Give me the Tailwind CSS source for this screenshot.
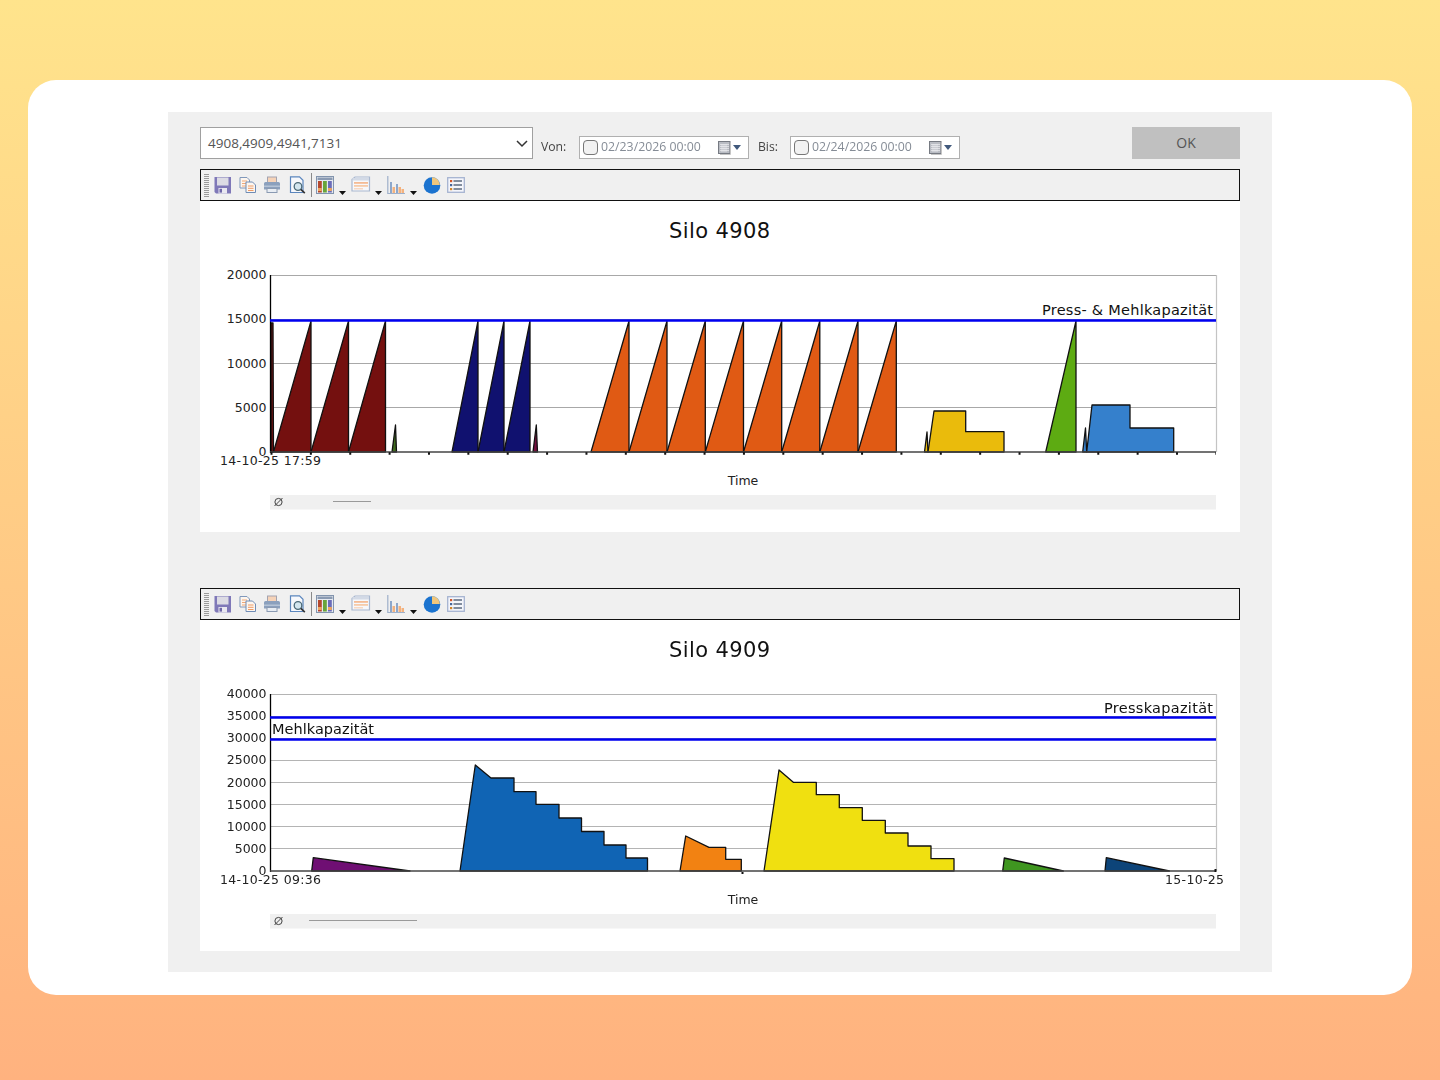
<!DOCTYPE html>
<html lang="de">
<head>
<meta charset="utf-8">
<title>Silo</title>
<script src="https://cdn.jsdelivr.net/npm/@tailwindcss/browser@4"></script>
</head>
<body class="m-0">
<svg width="0" height="0" class="absolute">
  <defs>
    <symbol id="i-save" viewBox="0 0 18 18">
      <path d="M0.500 1h16.500v16.500H2L0.500 16z" fill="#7f78b8"/>
      <rect x="3" y="1.500" width="11.500" height="8" fill="#dcdbe4"/>
      <rect x="4.500" y="12" width="8.500" height="5.500" fill="#e9e8f0"/>
      <rect x="5.500" y="12.800" width="2.500" height="3.800" fill="#6e67a8"/>
    </symbol>
    <symbol id="i-copy" viewBox="0 0 18 18">
      <path d="M1 1.500h7l2.500 2.500v8H1z" fill="#fdf6ef" stroke="#8098bb"/>
      <path d="M3 5h5M3 7.500h5M3 10h4" stroke="#f0a878"/>
      <path d="M7 6h6.500l3 3v7.500H7z" fill="#fdf6ef" stroke="#6f8cb6"/>
      <path d="M9 10h5.500M9 12.300h5.500M9 14.500h5.500" stroke="#ee9c66"/>
    </symbol>
    <symbol id="i-print" viewBox="0 0 18 18">
      <rect x="4.500" y="1" width="9" height="6" fill="#f6d3b8" stroke="#a3a3b0"/>
      <path d="M1 7.500a1.500 1.500 0 0 1 1.500-1.500h13a1.500 1.500 0 0 1 1.500 1.500v6H1z" fill="#8ba0bd"/>
      <rect x="1" y="9.500" width="16" height="1.500" fill="#b5c3d6"/>
      <rect x="4" y="12.500" width="10" height="4" fill="#e8edf3" stroke="#8a9ab2"/>
    </symbol>
    <symbol id="i-preview" viewBox="0 0 18 18">
      <path d="M1.500 0.800h9l3.500 3.500v12.200H1.500z" fill="#f6f8fc" stroke="#5b86bd" stroke-width="1.200"/>
      <circle cx="9" cy="10.500" r="3.800" fill="#d3e6ef" stroke="#4c6a78" stroke-width="1.300"/>
      <path d="M11.800 13.300l4 3.800" stroke="#333" stroke-width="1.600"/>
    </symbol>
    <symbol id="i-table" viewBox="0 0 18 18">
      <rect x="0.500" y="0.500" width="17" height="17" fill="#e6eaf1" stroke="#8294ad"/>
      <rect x="1.500" y="1.500" width="15" height="2.500" fill="#8a9ab2"/>
      <rect x="2" y="5" width="3.800" height="11.500" fill="#b5482e"/>
      <rect x="7" y="5" width="3.800" height="11.500" fill="#6aa53a"/>
      <rect x="12" y="5" width="3.800" height="11.500" fill="#6a6cb8"/>
      <path d="M2 13.500h3.800M12 13.500h3.800" stroke="#eda65e" stroke-width="3"/>
    </symbol>
    <symbol id="i-window" viewBox="0 0 20 18">
      <path d="M1 3.500L4 1h14.500v14H1z" fill="#f7f8fb" stroke="#a9b8cf" stroke-width="1.200"/>
      <rect x="1.500" y="2" width="16.500" height="2.500" fill="#d3dae6"/>
      <rect x="3" y="6" width="14" height="1.800" fill="#f4bb94"/>
      <rect x="3" y="9" width="14" height="1.800" fill="#f7cba9"/>
      <rect x="3" y="12" width="9" height="1.500" fill="#f7d8c3"/>
    </symbol>
    <symbol id="i-bars" viewBox="0 0 18 18">
      <path d="M0.800 0v17.500H18" fill="none" stroke="#9eb0ca" stroke-width="1.200"/>
      <rect x="3" y="6" width="2" height="11" fill="#8da7cb"/>
      <rect x="5.500" y="11" width="2.500" height="6" fill="#f4b27e"/>
      <rect x="9" y="8" width="2" height="9" fill="#8da7cb"/>
      <rect x="11.500" y="11" width="2.500" height="6" fill="#f4b27e"/>
      <rect x="14.500" y="13" width="2.500" height="4" fill="#f4b27e"/>
    </symbol>
    <symbol id="i-pie" viewBox="0 0 18 18">
      <circle cx="9" cy="9.500" r="8.300" fill="#1b73cf"/>
      <path d="M9 9V1.200A7.800 7.800 0 0 1 16.800 9z" fill="#efc67c"/>
    </symbol>
    <symbol id="i-legend" viewBox="0 0 18 18">
      <rect x="0.700" y="1.700" width="16.600" height="14.600" fill="#f5f6fb" stroke="#a5b3d0" stroke-width="1.300"/>
      <rect x="3" y="4" width="2.200" height="2.200" fill="#d2562a"/>
      <rect x="3" y="8" width="2.200" height="2.200" fill="#46669a"/>
      <rect x="3" y="12" width="2.200" height="2.200" fill="#d2862a"/>
      <path d="M6.500 5h8.500M6.500 9h8.500M6.500 13h8.500" stroke="#5c6b80" stroke-width="1.300"/>
    </symbol>
    <symbol id="i-drop" viewBox="0 0 7 4"><path d="M0 0h7L3.500 4z" fill="#111"/></symbol>
    <symbol id="i-cal" viewBox="0 0 14 14">
      <rect x="0.500" y="0.500" width="11.500" height="12" fill="#b9bcc3" stroke="#767a82"/>
      <path d="M2 3.500h9M2 5.500h9M2 7.500h9M2 9.500h9M4 3v8M6 3v8M8 3v8" stroke="#eeeef0" stroke-width=".7"/>
      <path d="M12.500 2v11.500H2" fill="none" stroke="#c4c4c4"/>
    </symbol>
    <symbol id="i-nul" viewBox="0 0 14 14">
      <circle cx="7" cy="7" r="3.600" fill="none" stroke="#444" stroke-width="1"/>
      <path d="M3 11L11 3" stroke="#444" stroke-width="1"/>
    </symbol>
  </defs>
</svg>

<main class="h-[1080px] w-[1440px] overflow-hidden bg-gradient-to-b from-[#ffe48c] to-[#ffb27f] pt-20 pl-7 font-['DejaVu_Sans',sans-serif]">
  <div class="h-[915px] w-[1384px] rounded-[28px] bg-white pt-8 pl-[140px]">
    <div class="h-[860px] w-[1104px] bg-[#f0f0f0] pt-[15px] pl-8">
      <div class="w-[1040px] blur-[0.3px]">

        <div class="flex h-8 items-end font-['Open_Sans',sans-serif]">
          <div class="flex h-8 w-[333px] items-center justify-between border-[1.5px] border-[#a0a0a0] bg-white pr-[3px] pl-[7px] text-[13.5px] text-[#555]">
            <span>4908,4909,4941,7131</span>
            <svg width="14" height="9" viewBox="0 0 14 9"><path d="M2 2l5 5 5-5" fill="none" stroke="#333" stroke-width="1.500"/></svg>
          </div>
          <span class="ml-[8px] flex h-[23px] w-[38px] items-center text-[12.2px] text-[#444]">Von:</span>
          <div class="flex h-[23px] w-[170px] items-center border-[1.5px] border-[#b0b0b0] bg-white pl-[3px] text-[12.3px] text-[#858c96]">
            <span class="h-[15px] w-[15px] rounded-[4px] border border-[#777] bg-[#f2f2f2]"></span>
            <span class="ml-[3px] w-[117px]">02/23/2026 00:00</span>
            <svg class="h-[14px] w-[14px]"><use href="#i-cal"/></svg>
            <svg class="ml-px" width="8" height="5" viewBox="0 0 8 5"><path d="M0 0h8L4 5z" fill="#41597c"/></svg>
          </div>
          <span class="ml-[9px] flex h-[23px] w-[32px] items-center text-[12.2px] text-[#444]">Bis:</span>
          <div class="flex h-[23px] w-[170px] items-center border-[1.5px] border-[#b0b0b0] bg-white pl-[3px] text-[12.3px] text-[#858c96]">
            <span class="h-[15px] w-[15px] rounded-[4px] border border-[#777] bg-[#f2f2f2]"></span>
            <span class="ml-[3px] w-[117px]">02/24/2026 00:00</span>
            <svg class="h-[14px] w-[14px]"><use href="#i-cal"/></svg>
            <svg class="ml-px" width="8" height="5" viewBox="0 0 8 5"><path d="M0 0h8L4 5z" fill="#41597c"/></svg>
          </div>
          <div class="ml-auto flex h-8 w-[108px] items-center justify-center bg-[#c0c0c0] pb-[2px] text-[14px] font-medium text-[#555]">OK</div>
        </div>

        <div class="mt-[10px] flex h-8 items-center border-[1.5px] border-[#111] bg-[#f0f0f0] pl-[3px]">
          <svg width="5" height="24"><path d="M0 1.500h5M0 3.500h5M0 5.500h5M0 7.500h5M0 9.500h5M0 11.500h5M0 13.500h5M0 15.500h5M0 17.500h5M0 19.500h5M0 21.500h5M0 23.500h5" stroke="#9a9a9a"/></svg>
          <svg class="ml-[5px] h-[18px] w-[18px]"><use href="#i-save"/></svg>
          <svg class="ml-[7px] h-[18px] w-[18px]"><use href="#i-copy"/></svg>
          <svg class="ml-[6px] h-[18px] w-[18px]"><use href="#i-print"/></svg>
          <svg class="ml-[8px] h-[18px] w-[18px]"><use href="#i-preview"/></svg>
          <span class="ml-[4px] h-6 w-px bg-[#8a8a8a]"></span>
          <svg class="ml-[4px] h-[18px] w-[18px]"><use href="#i-table"/></svg>
          <svg class="mt-[16px] ml-[5px] h-1 w-[7px]"><use href="#i-drop"/></svg>
          <svg class="ml-[5px] h-[18px] w-5"><use href="#i-window"/></svg>
          <svg class="mt-[16px] ml-[4px] h-1 w-[7px]"><use href="#i-drop"/></svg>
          <svg class="ml-[5px] h-[18px] w-[18px]"><use href="#i-bars"/></svg>
          <svg class="mt-[16px] ml-[5px] h-1 w-[7px]"><use href="#i-drop"/></svg>
          <svg class="ml-[6px] h-[18px] w-[18px]"><use href="#i-pie"/></svg>
          <svg class="ml-[6px] h-[18px] w-[18px]"><use href="#i-legend"/></svg>
        </div>

        <svg class="block bg-white" width="1040" height="331" viewBox="200 201 1040 331" font-family="DejaVu Sans, sans-serif" font-size="12.5" fill="#222">
          <text x="719.500" y="238" font-size="21" text-anchor="middle" textLength="101" fill="#111">Silo 4908</text>
          <path d="M270 275.500H1216M270 319.500H1216M270 363.500H1216M270 407.500H1216" stroke="#a8a8a8" stroke-width="1.200"/>
          <path d="M1216.500 275V452" stroke="#c4c4c4" stroke-width="1.200"/>
          <g stroke="#111" stroke-width="1.300" stroke-linejoin="round">
            <g fill="#74100f">
              <polygon points="271,452 271,323 273,323 273.500,452"/>
              <polygon points="273.500,452 311,321 311,452"/>
              <polygon points="311,452 348.500,321 348.500,452"/>
              <polygon points="348.500,452 385.500,321 385.500,452"/>
            </g>
            <polygon points="392,452 395.500,425 396.500,452" fill="#3f6a1e"/>
            <g fill="#10116f">
              <polygon points="452,452 478,321 478,452"/>
              <polygon points="478,452 504,321 504,452"/>
              <polygon points="504,452 530,321 530,452"/>
            </g>
            <polygon points="533,452 536.300,425 537.500,452" fill="#74103f"/>
            <g fill="#e05a14">
              <polygon points="591,452 629,321 629,452"/>
              <polygon points="629,452 667,321 667,452"/>
              <polygon points="667,452 705.300,321 705.300,452"/>
              <polygon points="705.300,452 743.500,321 743.500,452"/>
              <polygon points="743.500,452 781.700,321 781.700,452"/>
              <polygon points="781.700,452 819.800,321 819.800,452"/>
              <polygon points="819.800,452 858,321 858,452"/>
              <polygon points="858,452 896.300,321 896.300,452"/>
            </g>
            <g fill="#eabb0c">
              <polygon points="924.500,452 927,432 928,452"/>
              <polygon points="928,452 934,411 965.700,411 965.700,431.700 1004,431.700 1004,452"/>
            </g>
            <polygon points="1045.700,452 1076,321 1076,452" fill="#5dab12"/>
            <g fill="#3580cc">
              <polygon points="1082.700,452 1085.500,428 1086.700,452"/>
              <polygon points="1086.700,452 1092,405 1130,405 1130,428 1173.700,428 1173.700,452"/>
            </g>
          </g>
          <path d="M270.500 275V453" stroke="#000" stroke-width="1.300"/>
          <path d="M270 452H1216" stroke="#444" stroke-width="1.500"/>
          <path d="M270.500 453.500H1216" stroke="#111" stroke-width="2.500" stroke-dasharray="2 37.370"/>
          <path d="M270 320.500H1216" stroke="#0000f0" stroke-width="2.600"/>
          <text x="1213" y="315" font-size="14.500" text-anchor="end" textLength="171" fill="#111">Press- &amp; Mehlkapazität</text>
          <g text-anchor="end">
            <text x="266.500" y="279">20000</text>
            <text x="266.500" y="323">15000</text>
            <text x="266.500" y="367.500">10000</text>
            <text x="266.500" y="411.500">5000</text>
            <text x="266.500" y="456">0</text>
          </g>
          <text x="220" y="465" textLength="101">14-10-25 17:59</text>
          <text x="743" y="485" text-anchor="middle">Time</text>
          <rect x="270" y="495" width="946" height="14.500" fill="#f0f0f0"/>
          <use href="#i-nul" x="271.500" y="495" width="14" height="14"/>
          <path d="M333 501.500H371" stroke="#9a9a9a" stroke-width="1.200"/>
        </svg>

        <div class="mt-14 flex h-8 items-center border-[1.5px] border-[#111] bg-[#f0f0f0] pl-[3px]">
          <svg width="5" height="24"><path d="M0 1.500h5M0 3.500h5M0 5.500h5M0 7.500h5M0 9.500h5M0 11.500h5M0 13.500h5M0 15.500h5M0 17.500h5M0 19.500h5M0 21.500h5M0 23.500h5" stroke="#9a9a9a"/></svg>
          <svg class="ml-[5px] h-[18px] w-[18px]"><use href="#i-save"/></svg>
          <svg class="ml-[7px] h-[18px] w-[18px]"><use href="#i-copy"/></svg>
          <svg class="ml-[6px] h-[18px] w-[18px]"><use href="#i-print"/></svg>
          <svg class="ml-[8px] h-[18px] w-[18px]"><use href="#i-preview"/></svg>
          <span class="ml-[4px] h-6 w-px bg-[#8a8a8a]"></span>
          <svg class="ml-[4px] h-[18px] w-[18px]"><use href="#i-table"/></svg>
          <svg class="mt-[16px] ml-[5px] h-1 w-[7px]"><use href="#i-drop"/></svg>
          <svg class="ml-[5px] h-[18px] w-5"><use href="#i-window"/></svg>
          <svg class="mt-[16px] ml-[4px] h-1 w-[7px]"><use href="#i-drop"/></svg>
          <svg class="ml-[5px] h-[18px] w-[18px]"><use href="#i-bars"/></svg>
          <svg class="mt-[16px] ml-[5px] h-1 w-[7px]"><use href="#i-drop"/></svg>
          <svg class="ml-[6px] h-[18px] w-[18px]"><use href="#i-pie"/></svg>
          <svg class="ml-[6px] h-[18px] w-[18px]"><use href="#i-legend"/></svg>
        </div>

        <svg class="block bg-white" width="1040" height="331" viewBox="200 620 1040 331" font-family="DejaVu Sans, sans-serif" font-size="12.5" fill="#222">
          <text x="719.500" y="657" font-size="21" text-anchor="middle" textLength="101" fill="#111">Silo 4909</text>
          <path d="M270 694.500H1216M270 716.500H1216M270 738.500H1216M270 760.500H1216M270 782.500H1216M270 804.500H1216M270 826.500H1216M270 848.500H1216" stroke="#b4b4b4" stroke-width="1.200"/>
          <path d="M1216.500 694V871" stroke="#c4c4c4" stroke-width="1.200"/>
          <g stroke="#111" stroke-width="1.300" stroke-linejoin="round">
            <polygon points="311.700,871 313.300,857.700 410,871" fill="#6f0f73"/>
            <polygon points="460,871 475.300,765 491,778 514,778 514,791.700 536,791.700 536,804.300 559,804.300 559,818 581.500,818 581.500,831.500 604,831.500 604,845 626,845 626,858 647.500,858 647.500,871" fill="#1064b4"/>
            <polygon points="680,871 685.700,836 709,847.300 725.700,847.300 725.700,859.300 741.300,859.300 741.300,871" fill="#f28212"/>
            <polygon points="764,871 779,770 793.300,782.300 816.300,782.300 816.300,794.700 839.300,794.700 839.300,807.700 862.300,807.700 862.300,820.300 885.300,820.300 885.300,833 908,833 908,846 931,846 931,858.700 954,858.700 954,871" fill="#f0e010"/>
            <polygon points="1002.700,871 1004.300,858 1063.300,871" fill="#3f9620"/>
            <polygon points="1105,871 1106.300,857.700 1169.300,871" fill="#0d4479"/>
          </g>
          <path d="M270.500 694V872" stroke="#000" stroke-width="1.300"/>
          <path d="M270 871H1216" stroke="#444" stroke-width="1.500"/>
          <path d="M742.500 872v2M1215.500 869v3" stroke="#111" stroke-width="2"/>
          <path d="M270 717.500H1216M270 739.500H1216" stroke="#0000f0" stroke-width="2.600"/>
          <text x="1213" y="713" font-size="14.500" text-anchor="end" textLength="109" fill="#111">Presskapazität</text>
          <text x="272" y="734" font-size="14.500" textLength="102" fill="#111">Mehlkapazität</text>
          <g text-anchor="end">
            <text x="266.500" y="698">40000</text>
            <text x="266.500" y="720">35000</text>
            <text x="266.500" y="742">30000</text>
            <text x="266.500" y="764">25000</text>
            <text x="266.500" y="786.500">20000</text>
            <text x="266.500" y="808.500">15000</text>
            <text x="266.500" y="830.500">10000</text>
            <text x="266.500" y="852.500">5000</text>
            <text x="266.500" y="875">0</text>
          </g>
          <text x="220" y="884" textLength="101">14-10-25 09:36</text>
          <text x="1224" y="884" text-anchor="end" textLength="59">15-10-25</text>
          <text x="743" y="904" text-anchor="middle">Time</text>
          <rect x="270" y="914" width="946" height="14.500" fill="#f0f0f0"/>
          <use href="#i-nul" x="271.500" y="914" width="14" height="14"/>
          <path d="M309 920.500H417" stroke="#9a9a9a" stroke-width="1.200"/>
        </svg>

      </div>
    </div>
  </div>
</main>
</body>
</html>
